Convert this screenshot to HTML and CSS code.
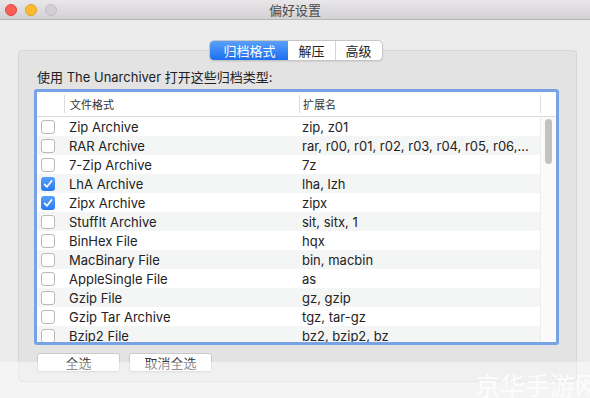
FILE: index.html
```html
<!DOCTYPE html>
<html lang="zh-CN">
<head>
    <meta charset="UTF-8">
    <meta name="viewport" content="width=device-width, initial-scale=1.0">
    <title>偏好设置</title>
    <link rel="stylesheet" href="styles.css">
</head>
<body>

    <div class="window">
        <div class="title-bar">
            <div class="lights">
                <span class="light red"></span>
                <span class="light yellow"></span>
                <span class="light grey"></span>
            </div>
            <div class="title">偏好设置</div>
        </div>

        <div class="tabs">
            <div class="tab active">归档格式</div>
            <div class="tab">解压</div>
            <div class="tab">高级</div>
        </div>

        <div class="tab-box">
            <p class="label">使用 The Unarchiver 打开这些归档类型:</p>

            <div class="table">
                <div class="table-head">
                    <div class="col-check"></div>
                    <div class="col-name head-cell">文件格式</div>
                    <div class="col-ext head-cell">扩展名</div>
                    <div class="col-scroll head-cell"></div>
                </div>
                <div class="table-body">
                    <div class="rows" id="rows"></div>
                    <div class="scroller">
                        <div class="thumb"></div>
                    </div>
                </div>
            </div>

            <div class="buttons">
                <button class="btn">全选</button>
                <button class="btn">取消全选</button>
            </div>
        </div>
    </div>

    <div class="fade-band"></div>
    <div class="watermark">京华手游网</div>

    <script>
        const formats = [
            { name: 'Zip Archive', ext: 'zip, z01', on: false },
            { name: 'RAR Archive', ext: 'rar, r00, r01, r02, r03, r04, r05, r06,...', on: false },
            { name: '7-Zip Archive', ext: '7z', on: false },
            { name: 'LhA Archive', ext: 'lha, lzh', on: true },
            { name: 'Zipx Archive', ext: 'zipx', on: true },
            { name: 'StuffIt Archive', ext: 'sit, sitx, 1', on: false },
            { name: 'BinHex File', ext: 'hqx', on: false },
            { name: 'MacBinary File', ext: 'bin, macbin', on: false },
            { name: 'AppleSingle File', ext: 'as', on: false },
            { name: 'Gzip File', ext: 'gz, gzip', on: false },
            { name: 'Gzip Tar Archive', ext: 'tgz, tar-gz', on: false },
            { name: 'Bzip2 File', ext: 'bz2, bzip2, bz', on: false }
        ];

        const tick = '<svg viewBox="0 0 14 14" width="14" height="14"><path d="M3.6 7.4 L6 9.8 L10.6 4" fill="none" stroke="#fff" stroke-width="1.7" stroke-linecap="round" stroke-linejoin="round"/></svg>';

        const rows = document.getElementById('rows');
        formats.forEach(function(f) {
            const row = document.createElement('div');
            row.className = 'row';
            row.innerHTML =
                '<div class="col-check"><span class="box' + (f.on ? ' checked' : '') + '">' + (f.on ? tick : '') + '</span></div>' +
                '<div class="col-name">' + f.name + '</div>' +
                '<div class="col-ext">' + f.ext + '</div>';
            rows.appendChild(row);
        });
    </script>

</body>
</html>
```

FILE: styles.css
```css
body {
    margin: 0;
    width: 590px;
    height: 398px;
    overflow: hidden;
    position: relative;
    background-color: #ececec;
    font-family: Inter, "Noto Sans CJK SC", sans-serif;
    font-size: 13px;
    color: #222;
}
.window {
    display: flex;
    flex-direction: column;
    height: 100%;
}
.title-bar {
    height: 19px;
    border-bottom: 1px solid #b8b6b8;
    background: linear-gradient(#e9e7e9, #d3d1d3);
    display: flex;
    align-items: center;
    position: relative;
}
.lights {
    display: flex;
    gap: 8px;
    padding-left: 5px;
}
.light {
    width: 12px;
    height: 12px;
    border-radius: 50%;
    box-sizing: border-box;
}
.red {
    background-color: #fc5d57;
    border: 1px solid #e0443e;
}
.yellow {
    background-color: #fdbc2f;
    border: 1px solid #dea123;
}
.grey {
    background-color: #d2d0d2;
    border: 1px solid #c0bec0;
}
.title {
    position: absolute;
    left: 0;
    right: 0;
    text-align: center;
    font-family: "Noto Sans CJK SC", sans-serif;
    font-size: 13px;
    color: #4b4b4b;
}
.tabs {
    display: flex;
    align-self: center;
    margin-top: 20px;
    margin-bottom: -11px;
    margin-left: 2px;
    position: relative;
    z-index: 1;
    border: 1px solid #c6c6c6;
    border-radius: 5px;
    background-color: #fff;
    box-shadow: 0 1px 1px rgba(0, 0, 0, 0.08);
    overflow: hidden;
}
.tab {
    height: 19px;
    line-height: 19px;
    padding: 0 10px;
    font-family: "Noto Sans CJK SC", sans-serif;
    font-size: 13px;
    color: #222;
    border-left: 1px solid #d4d4d4;
}
.tab:first-child {
    border-left: none;
}
.tab.active {
    background: linear-gradient(#5a9ffa, #1c6ff0);
    color: #fff;
    padding: 0 13px;
}
.tab.active + .tab {
    border-left: none;
}
.tab-box {
    margin: 0 13px 0 18px;
    height: 332px;
    border: 1px solid #d6d6d6;
    border-radius: 4px;
    background-color: #e3e3e3;
    padding: 18px 0 0 18px;
    box-sizing: border-box;
}
.label {
    margin: 0;
    height: 16px;
    line-height: 16px;
    font-size: 13px;
}
.table {
    margin: 4px 0 0 -3px;
    width: 525px;
    height: 256px;
    box-sizing: border-box;
    border: 3px solid #78a2e6;
    border-radius: 3px;
    background-color: #fff;
    display: flex;
    flex-direction: column;
    overflow: hidden;
}
.table-head {
    display: flex;
    align-items: center;
    height: 24px;
    flex-shrink: 0;
    border-bottom: 1px solid #dadada;
    font-family: "Noto Sans CJK SC", sans-serif;
    font-size: 11px;
    color: #333;
}
.head-cell {
    border-left: 1px solid #dcdcdc;
    height: 18px;
    line-height: 18px;
}
.col-check {
    width: 27px;
    flex-shrink: 0;
    display: flex;
    align-items: center;
    padding-left: 4px;
    box-sizing: border-box;
}
.col-name {
    width: 235px;
    flex-shrink: 0;
    padding-left: 5px;
    box-sizing: border-box;
}
.col-ext {
    width: 241px;
    flex-shrink: 0;
    padding-left: 3px;
    box-sizing: border-box;
    white-space: nowrap;
}
.col-scroll {
    width: 16px;
}
.table-body {
    display: flex;
    flex: 1;
    overflow: hidden;
}
.rows {
    width: 503px;
}
.row {
    display: flex;
    align-items: center;
    height: 19px;
}
.row:nth-child(even) {
    background-color: #f4f5f5;
}
.box {
    width: 14px;
    height: 14px;
    box-sizing: border-box;
    border: 1px solid #b9b9b9;
    border-radius: 3px;
    background-color: #fff;
    display: block;
}
.box.checked {
    border: none;
    background: linear-gradient(#56a0fb, #2a7af3);
}
.box svg {
    display: block;
}
.scroller {
    width: 16px;
    border-left: 1px solid #ededed;
    background-color: #fafafa;
    box-sizing: border-box;
}
.thumb {
    width: 7px;
    height: 45px;
    margin: 2px 0 0 4px;
    border-radius: 4px;
    background-color: #c2c2c2;
}
.buttons {
    display: flex;
    gap: 9px;
    margin-top: 8px;
}
.btn {
    width: 83px;
    height: 19px;
    padding: 0;
    border: 1px solid #cbcbcb;
    border-radius: 3px;
    background-color: #fff;
    font-family: "Noto Sans CJK SC", sans-serif;
    font-size: 13px;
    line-height: 17px;
    color: #333;
    box-shadow: 0 1px 1px rgba(0, 0, 0, 0.05);
}
.fade-band {
    position: absolute;
    left: 0;
    right: 0;
    top: 362px;
    bottom: 0;
    background-color: rgba(255, 255, 255, 0.45);
}
.watermark {
    position: absolute;
    left: 475px;
    top: 366px;
    font-family: "Noto Sans CJK SC", sans-serif;
    font-size: 25px;
    white-space: nowrap;
    color: rgba(255, 255, 255, 0.85);
}
```
